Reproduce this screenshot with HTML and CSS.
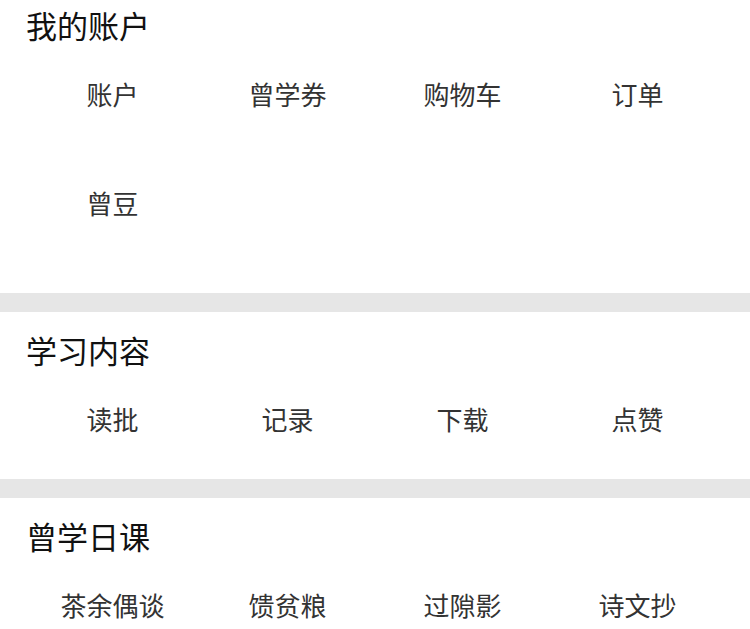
FILE: index.html
```html
<!DOCTYPE html>
<html lang="zh-CN">
<head>
<meta charset="utf-8">
<title>我的账户</title>
<link rel="stylesheet" href="styles.css">
</head>
<body>
<div class="page">
  <section class="section section--first">
    <h2 class="section-title">我的账户</h2>
    <div class="grid">
      <div class="item">账户</div>
      <div class="item">曾学券</div>
      <div class="item">购物车</div>
      <div class="item">订单</div>
      <div class="item">曾豆</div>
    </div>
  </section>
  <div class="divider"></div>
  <section class="section">
    <h2 class="section-title">学习内容</h2>
    <div class="grid">
      <div class="item">读批</div>
      <div class="item">记录</div>
      <div class="item">下载</div>
      <div class="item">点赞</div>
    </div>
  </section>
  <div class="divider"></div>
  <section class="section section--last">
    <h2 class="section-title">曾学日课</h2>
    <div class="grid">
      <div class="item">茶余偶谈</div>
      <div class="item">馈贫粮</div>
      <div class="item">过隙影</div>
      <div class="item">诗文抄</div>
    </div>
  </section>
</div>
</body>
</html>
```
FILE: styles.css
```css
html, body {
  margin: 0;
  padding: 0;
  background: #ffffff;
  overflow: hidden;
}
body {
  font-family: "Noto Sans CJK SC", "Noto Sans", sans-serif;
  width: 750px;
  height: 629px;
}
.page {
  display: flex;
  flex-direction: column;
  height: 629px;
  overflow: hidden;
}
.section {
  padding: 24px 25px 6px;
  background: #ffffff;
  flex: none;
}
.section--first {
  padding-top: 11px;
  padding-bottom: 36px;
}
.section--last {
  flex: 1 1 auto;
  min-height: 0;
  overflow: hidden;
  padding-bottom: 0;
}
.section-title {
  margin: 0;
  padding-left: 1px;
  font-size: 31px;
  line-height: 28px;
  font-weight: 400;
  color: #111111;
}
.grid {
  display: grid;
  grid-template-columns: repeat(4, 175px);
  grid-auto-rows: 109px;
  align-items: center;
  justify-items: center;
}
.item {
  font-size: 26px;
  line-height: 30px;
  color: #333333;
}
.divider {
  height: 19px;
  background: #e6e6e6;
  flex: none;
}
```
